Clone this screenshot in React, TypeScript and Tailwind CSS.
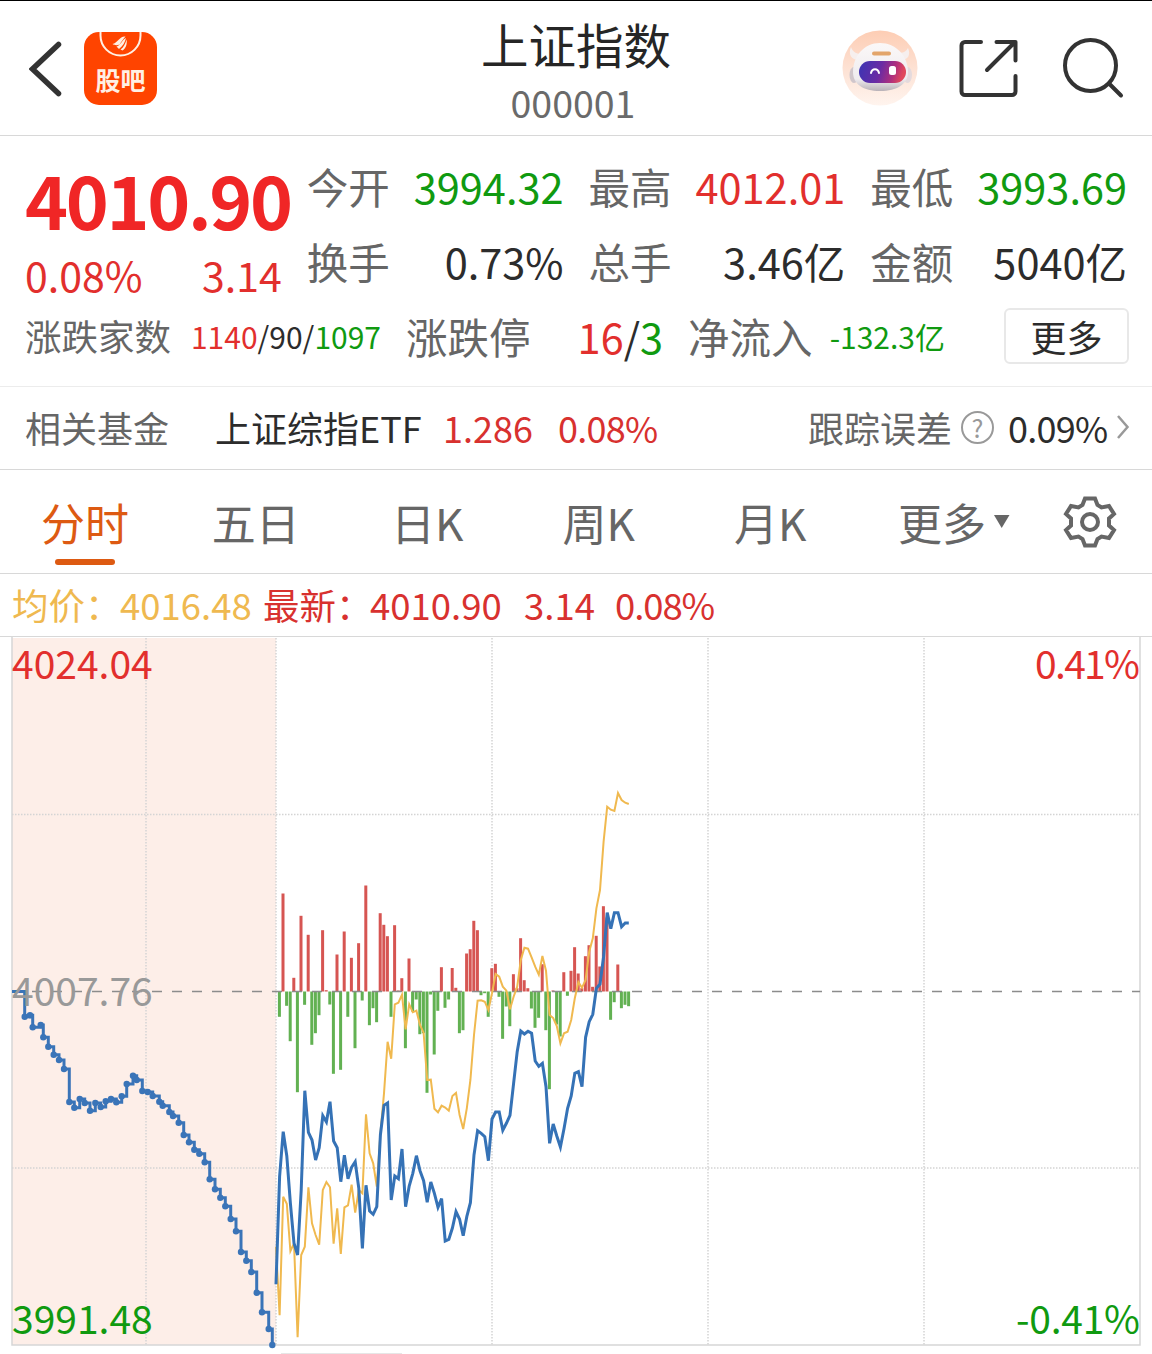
import React from 'react';

const quotes = [
    { label: '今开', value: '3994.32', color: 'text-[#109a10]' },
    { label: '最高', value: '4012.01', color: 'text-[#e22f2d]' },
    { label: '最低', value: '3993.69', color: 'text-[#109a10]' },
    { label: '换手', value: '0.73%', color: 'text-[#2c2c2c]' },
    { label: '总手', value: '3.46亿', color: 'text-[#2c2c2c]' },
    { label: '金额', value: '5040亿', color: 'text-[#2c2c2c]' },
];

const tabs = ['分时', '五日', '日K', '周K', '月K'];

// chart geometry, one point per minute
const LEFT = 12;
const OPEN = 276;
const RIGHT = 1140;
const BASE = 991.5;
const BOTTOM = 1345;
const STEP = 3.6;

const price = [
    1284.3, 1176.7, 1131.7, 1156, 1203.3, 1243.3, 1255, 1190, 1090.7, 1132.3,
    1140, 1160, 1147.7, 1115.7, 1122, 1101.7, 1141, 1147.7, 1181.7, 1155.3,
    1178.7, 1167.3, 1161.7, 1188.3, 1248.3, 1185.3, 1211, 1214.3, 1206.7, 1135,
    1105.3, 1103, 1200, 1176, 1178.7, 1149, 1206.7, 1186, 1173.3, 1155.7,
    1170.7, 1180.7, 1202.3, 1182, 1193.3, 1207.3, 1198.7, 1241, 1239.5, 1228,
    1211.7, 1219.3, 1235.7, 1216.7, 1202.7, 1155, 1130.7, 1133.3, 1136.7, 1160.7,
    1119, 1112, 1112, 1130.3, 1123.3, 1115.3, 1083.3, 1051.7, 1031, 1034,
    1031.3, 1033.3, 1061, 1066.3, 1063.3, 1086.7, 1143.3, 1124, 1136, 1147,
    1128.7, 1108.3, 1096, 1073.3, 1071.7, 1086.7, 1037.3, 1021.7, 1014.3, 988.3,
    984, 956.7, 912.7, 928.7, 912.7, 912.7, 926.7, 923, 923,
];

const average = [
    1246.7, 1315.3, 1196.7, 1203.7, 1251, 1243.3, 1337.3, 1255, 1246.7, 1187.3,
    1223.3, 1235, 1244.7, 1190, 1182, 1187.3, 1243.7, 1208.3, 1254, 1207.3,
    1205.3, 1184.7, 1212.7, 1190, 1193.3, 1114.3, 1153.3, 1163.3, 1186.7, 1133.3,
    1093.3, 1041.7, 1058.7, 1004.3, 1002.7, 994.7, 1029.3, 1004.3, 1012.3, 1010.7,
    1025, 1032.7, 1080, 1079.7, 1108.7, 1112.3, 1105.7, 1107.5, 1110.7, 1096,
    1093, 1115, 1129, 1108.3, 1080, 1035, 1000.7, 1000.3, 1001.7, 1010,
    993.3, 974, 976.7, 986.7, 990.7, 1009.3, 996.7, 986.7, 960, 947.7,
    948.7, 957.3, 966.7, 974.7, 956, 970.7, 1015, 1018, 1026, 1043.3,
    1033.3, 1031.7, 1020, 998.3, 982, 987.7, 980, 951.7, 938.3, 908.3,
    890, 841.7, 806.7, 809.7, 811, 793, 800, 802.7, 804,
];

const bars = [
    -25.3, 98, -14.3, -49.7, 13.7, -100.7, 75.7, -13.3, 56.7, -53.3,
    -41.7, -23.7, 61.3, 1.3, -13, -82.3, 37, -78.3, 60, -25.3,
    33.7, -56.7, 48.3, -9, 106, -33.7, -16.7, -30.7, 78.3, 66.7,
    55.3, -25.3, 66.3, 1, 13.3, -56.7, 33, -20, -8, -42.7,
    -41.7, -101.3, -3, -63, -19.3, 24.3, -16.3, -8, 23.5, 3.7,
    -41.7, -38.7, 38, 42.3, 70.7, 61.3, -3.7, -1.7, -25.3, 23.3,
    27.7, -5.3, -47.3, -15, -34.7, 17.3, 3.3, 53.3, 11.3, 3.3,
    -17, -36.3, -26.3, 27.3, -38.7, -97.7, 1, -33, -45, 19.3,
    -4.3, 20.7, 44.3, 18, 3.3, 35.3, 46.3, 4.7, 55.7, 25,
    85.3, 74, -28.3, -10.7, 27, -16.7, -13.3, -14.7,
];

// call auction, before the open
const auction: [number, number][] = [
    [24.7, 1016.7], [30, 1015.3], [32.7, 1027.3], [40.7, 1025], [43.3, 1037.3], [48.3, 1046.7],
    [53.7, 1054.7], [59, 1060], [64, 1069], [69.3, 1102], [74.3, 1107.7], [79.7, 1099],
    [84.7, 1103], [90, 1110.7], [95.3, 1103], [100.7, 1107], [105.7, 1101.3], [111, 1099],
    [116.3, 1102.3], [121.7, 1096.3], [126.7, 1084], [133, 1075.7], [136.7, 1080], [142.3, 1091],
    [147.7, 1092], [152.7, 1096], [159.3, 1101.7], [162.7, 1105.7], [169.3, 1112], [173, 1116],
    [178.7, 1122.7], [183.7, 1135], [189, 1142.3], [194.3, 1149.7], [199.3, 1153.7], [204.7, 1162.3],
    [209.7, 1179.3], [215, 1189.3], [220.3, 1197.7], [225.3, 1206.3], [230.7, 1219], [236, 1231.3],
    [241, 1252], [246.3, 1260.7], [251.3, 1272], [256.7, 1292.7], [262, 1312.3], [268.7, 1329],
    [272.3, 1345],
];

const toPoints = (ys: number[]) => ys.map((y, i) => `${(OPEN + i * STEP).toFixed(1)},${y}`).join(' ');
const auctionPath = `M${LEFT} ${BASE}` + auction.map(([x, y]) => `H${x}V${y}`).join('');

function Robot() {
    return (
        <svg width="76" height="76" viewBox="0 0 76 76">
            <defs>
                <linearGradient id="halo" x1="0" y1="0" x2="0" y2="1">
                    <stop offset="0" stopColor="#fdcdb4" />
                    <stop offset="0.55" stopColor="#fde3d6" />
                    <stop offset="1" stopColor="#fff4ee" />
                </linearGradient>
                <linearGradient id="visor" x1="0" y1="0" x2="1" y2="0.15">
                    <stop offset="0" stopColor="#3a35b4" />
                    <stop offset="0.5" stopColor="#6a2ba4" />
                    <stop offset="0.8" stopColor="#b02f7c" />
                    <stop offset="1" stopColor="#e0485c" />
                </linearGradient>
                <linearGradient id="shell" x1="0" y1="0" x2="0" y2="1">
                    <stop offset="0" stopColor="#fbf8f8" />
                    <stop offset="0.75" stopColor="#efecef" />
                    <stop offset="1" stopColor="#b9b2b8" />
                </linearGradient>
            </defs>
            <circle cx="38" cy="38" r="37.5" fill="url(#halo)" />
            <path d="M9 17c-3 7 0 13 8 13l5-7c-6 2-11 0-13-6zM66 18c3 7 0 12-7 12l-5-8c6 2 10 0 12-4z" fill="#f6efee" />
            <ellipse cx="12" cy="45" rx="4.5" ry="8" fill="#d0c6cb" />
            <ellipse cx="65.500" cy="45" rx="4.500" ry="8" fill="#e4dadd" />
            <path d="M38 13c16 0 28 13 28 29 0 12-11 19-28 19S11 54 11 42c0-16 11-29 27-29z" fill="url(#shell)" />
            <rect x="30" y="21.500" width="19" height="4" rx="2" fill="#e3a56b" />
            <rect x="17" y="31" width="47" height="22" rx="11" fill="url(#visor)" />
            <path d="M29 43c1-5 7-5 8 0" stroke="#fff" strokeWidth="2" fill="none" strokeLinecap="round" />
            <rect x="47" y="36" width="7" height="9" rx="2.500" fill="#fff" />
        </svg>
    );
}

function Header() {
    return (
        <header className="h-[136px] border-t border-t-black border-b border-b-[#d8d8d8] grid grid-cols-[1fr_auto_1fr]">
            <div className="flex items-start pt-[31px] pl-[29px]">
                <svg width="34" height="74" viewBox="29 31 34 74" fill="none" stroke="#333" strokeWidth="5.500" strokeLinecap="round">
                    <path d="M58.500 43.500L32.500 68l26 24.500" />
                </svg>
                <div className="ml-[21px] w-[73px] h-[73px] rounded-[15px] bg-[#ff4400] overflow-hidden flex flex-col items-center">
                    <svg width="73" height="28" viewBox="0 0 73 28" fill="none">
                        <path d="M16.500 0v3.500a20 20 0 0 0 40 0V0" stroke="#fff0e4" strokeWidth="2" />
                        <path d="M28.500 12c5-1 7-8 13-7.500-2 2-4 5-6 8-2 1-5 1-7-.5zM32.500 14.500c4-1 6-7 9.500-8.500-1 4-3 8-7 11zM36.500 17.500c3-2 5-6 6-10 1 5-1 9-4 11z" fill="#fff0e4" />
                    </svg>
                    <span className="mt-[5px] text-[25px] leading-[28px] font-bold text-[#fff0e4]">股吧</span>
                </div>
            </div>
            <div className="flex flex-col items-center">
                <h1 className="mt-[15px] text-[47.5px] leading-[56px] text-[#262626]">上证指数</h1>
                <p className="mt-[5px] pr-[6px] text-[37.5px] leading-[50px] text-[#6a6a6a]">000001</p>
            </div>
            <div className="flex justify-end items-start pt-[29px] pr-[28px]">
                <Robot />
                <svg className="ml-[40px]" width="62" height="76" viewBox="958 30 62 76" fill="none" stroke="#333" strokeWidth="4" strokeLinecap="round" strokeLinejoin="round">
                    <path d="M981 42h-16a3.500 3.500 0 0 0-3.500 3.500v46a3.500 3.500 0 0 0 3.500 3.500h47a3.500 3.500 0 0 0 3.500-3.500V76M996.500 42h19v18.500M1015 42l-28 28" />
                </svg>
                <svg className="ml-[41px]" width="63" height="76" viewBox="1061 30 63 76" fill="none" stroke="#333" strokeWidth="4" strokeLinecap="round">
                    <circle cx="1090.500" cy="65.500" r="25.500" />
                    <path d="M1109 83.500l12 12" />
                </svg>
            </div>
        </header>
    );
}

function Summary() {
    return (
        <section className="h-[250px] px-[25px] pt-[20px]">
            <div className="grid grid-cols-4 gap-x-[25px] h-[145px]">
                <div className="row-span-2">
                    <p className="text-[73px] leading-[84px] font-bold text-[#f02626] tracking-[-0.032em] whitespace-nowrap">4010.90</p>
                    <div className="flex justify-between text-[41px] leading-[60px] mt-[4px] text-[#e22f2d]">
                        <span>0.08%</span>
                        <span>3.14</span>
                    </div>
                </div>
                {quotes.map(q => (
                    <div key={q.label} className="flex justify-between text-[41.5px] h-[75px] leading-[60px] whitespace-nowrap">
                        <span className="text-[#666]">{q.label}</span>
                        <span className={q.color}>{q.value}</span>
                    </div>
                ))}
            </div>
            <div className="flex items-center gap-[25px] h-[60px] mt-[5px] leading-[60px] whitespace-nowrap">
                <div className="w-[356px] flex justify-between">
                    <span className="text-[36.5px] text-[#666]">涨跌家数</span>
                    <span className="text-[30px] text-[#2c2c2c]">
                        <span className="text-[#e22f2d]">1140</span>/90/<span className="text-[#109a10]">1097</span>
                    </span>
                </div>
                <div className="w-[257px] flex justify-between text-[41.5px]">
                    <span className="text-[#666]">涨跌停</span>
                    <span className="text-[#2c2c2c]">
                        <span className="text-[#e22f2d]">16</span>/<span className="text-[#109a10]">3</span>
                    </span>
                </div>
                <div className="w-[257px] flex justify-between text-[41.5px]">
                    <span className="text-[#666]">净流入</span>
                    <span className="text-[30px] text-[#109a10]">-132.3亿</span>
                </div>
                <button className="ml-auto -mr-[2px] w-[125px] h-[56px] rounded-[6px] border-2 border-[#e8e8e8] text-[36px] leading-[50px] text-[#2c2c2c]">更多</button>
            </div>
        </section>
    );
}

function FundRow() {
    return (
        <section className="h-[84px] border-t border-t-[#ececec] border-b border-b-[#d8d8d8] px-[25px] flex items-center text-[36px] leading-[50px] pb-[2px] whitespace-nowrap">
            <span className="text-[#666]">相关基金</span>
            <span className="ml-[46px] w-[228px] text-[#2c2c2c]">上证综指ETF</span>
            <span className="w-[115px] text-[#d8312f]">1.286</span>
            <span className="text-[#d8312f] tracking-[-0.02em]">0.08%</span>
            <span className="ml-auto text-[#666]">跟踪误差</span>
            <span className="ml-[9px] w-[33px] h-[33px] rounded-full border-[2.5px] border-[#999] flex items-center justify-center text-[25px] leading-none text-[#999]">?</span>
            <span className="ml-[14px] w-[102px] text-[#2c2c2c] tracking-[-0.02em]">0.09%</span>
            <svg className="ml-[6px] -mr-[3px]" width="14" height="28" viewBox="0 0 14 28" fill="none" stroke="#999" strokeWidth="2.500">
                <path d="M2 3l9.500 11L2 25" />
            </svg>
        </section>
    );
}

function Tabs() {
    return (
        <nav className="h-[104px] border-b border-b-[#d8d8d8] flex text-[44px] leading-[64px] text-[#666] whitespace-nowrap">
            {tabs.map((tab, i) => (
                <div key={tab} className={i === 0 ? 'w-[170px] pt-[20px] flex flex-col items-center text-[#dd5a12]' : 'w-[171.5px] pt-[20px] flex flex-col items-center'}>
                    {tab}
                    {i === 0 && <span className="mt-[5px] w-[60px] h-[6px] rounded-full bg-[#dd5a12]" />}
                </div>
            ))}
            <div className="ml-[42px] pt-[20px] flex">
                更多
                <svg className="ml-[8px] mt-[25px]" width="16" height="13" viewBox="0 0 16 13">
                    <path d="M0 0h15.500L7.700 13z" fill="#666" />
                </svg>
            </div>
            <svg className="ml-auto mr-[34px] mt-[24px]" width="56" height="56" viewBox="-28 -28 56 56" fill="none" stroke="#666" strokeWidth="4">
                <path d="M-5-23.500H5L7.500-17l4 2.500L19-16l5 8-5 4.500v7L24 8l-5 8-7.500-1.500-4 2.500L5 23.500H-5L-7.500 17l-4-2.500L-19 16l-5-8 5-4.500v-7L-24-8l5-8 7.500 1.500 4-2.500z" />
                <circle r="8" />
            </svg>
        </nav>
    );
}

function Chart() {
    return (
        <svg className="block" width="1152" height="717" viewBox="0 637 1152 717" fontSize="39">
            <rect x={LEFT} y="638" width={OPEN - LEFT} height={BOTTOM - 638} fill="#fdeee8" />
            <g stroke="#d4d4d4" strokeWidth="1.500" strokeDasharray="1.500 1.500">
                {[146, 276, 492, 708, 924].map(x => <path key={x} d={`M${x} 638V${BOTTOM}`} />)}
                {[814.5, 1168].map(y => <path key={y} d={`M${LEFT} ${y}H${RIGHT}`} />)}
            </g>
            <path d={`M${LEFT} 637V${BOTTOM}H${RIGHT}V637`} fill="none" stroke="#d6d6d6" strokeWidth="1.500" />
            <path d="M281 1353.500H402" stroke="#e6e6e6" />

            {bars.map((h, i) => (
                <rect
                    key={i}
                    x={OPEN + (i + 1) * STEP - 1.7}
                    y={h > 0 ? BASE - h : BASE}
                    width="3"
                    height={Math.abs(h)}
                    fill={h > 0 ? '#d65552' : '#62b152'}
                />
            ))}
            <path d={`M${LEFT} ${BASE}H${RIGHT}`} stroke="#8c8c8c" strokeWidth="1.700" strokeDasharray="10 10" />

            <polyline points={toPoints(average)} fill="none" stroke="#f0b94f" strokeWidth="2" />
            <polyline points={toPoints(price)} fill="none" stroke="#3572b6" strokeWidth="3" />
            <path d={auctionPath} fill="none" stroke="#3a74b8" strokeWidth="3" />
            {auction.map(([x, y]) => <circle key={x} cx={x} cy={y} r="3.200" fill="#3a74b8" />)}

            <text x="12" y="679" fill="#e22f2d">4024.04</text>
            <text x="12" y="1006" fill="#999">4007.76</text>
            <text x="12" y="1334" fill="#109a10">3991.48</text>
            <text x="1140" y="679" fill="#e22f2d" textAnchor="end" textLength="105">0.41%</text>
            <text x="1140" y="1334" fill="#109a10" textAnchor="end" textLength="124">-0.41%</text>
        </svg>
    );
}

export default function App() {
    return (
        <div className="w-[1152px] h-[1354px] overflow-hidden bg-white font-['Noto_Sans_CJK_SC',sans-serif]">
            <Header />
            <Summary />
            <FundRow />
            <Tabs />
            <div className="h-[63px] border-b border-b-[#d8d8d8] pl-[12px] flex items-center text-[36.5px] leading-[50px] text-[#d8312f] whitespace-nowrap">
                <span className="w-[108px] text-[#efb950]">均价：</span>
                <span className="w-[143px] text-[#efb950]">4016.48</span>
                <span className="w-[107px]">最新：</span>
                <span className="w-[154px]">4010.90</span>
                <span className="w-[91px]">3.14</span>
                <span className="tracking-[-0.03em]">0.08%</span>
            </div>
            <Chart />
        </div>
    );
}
